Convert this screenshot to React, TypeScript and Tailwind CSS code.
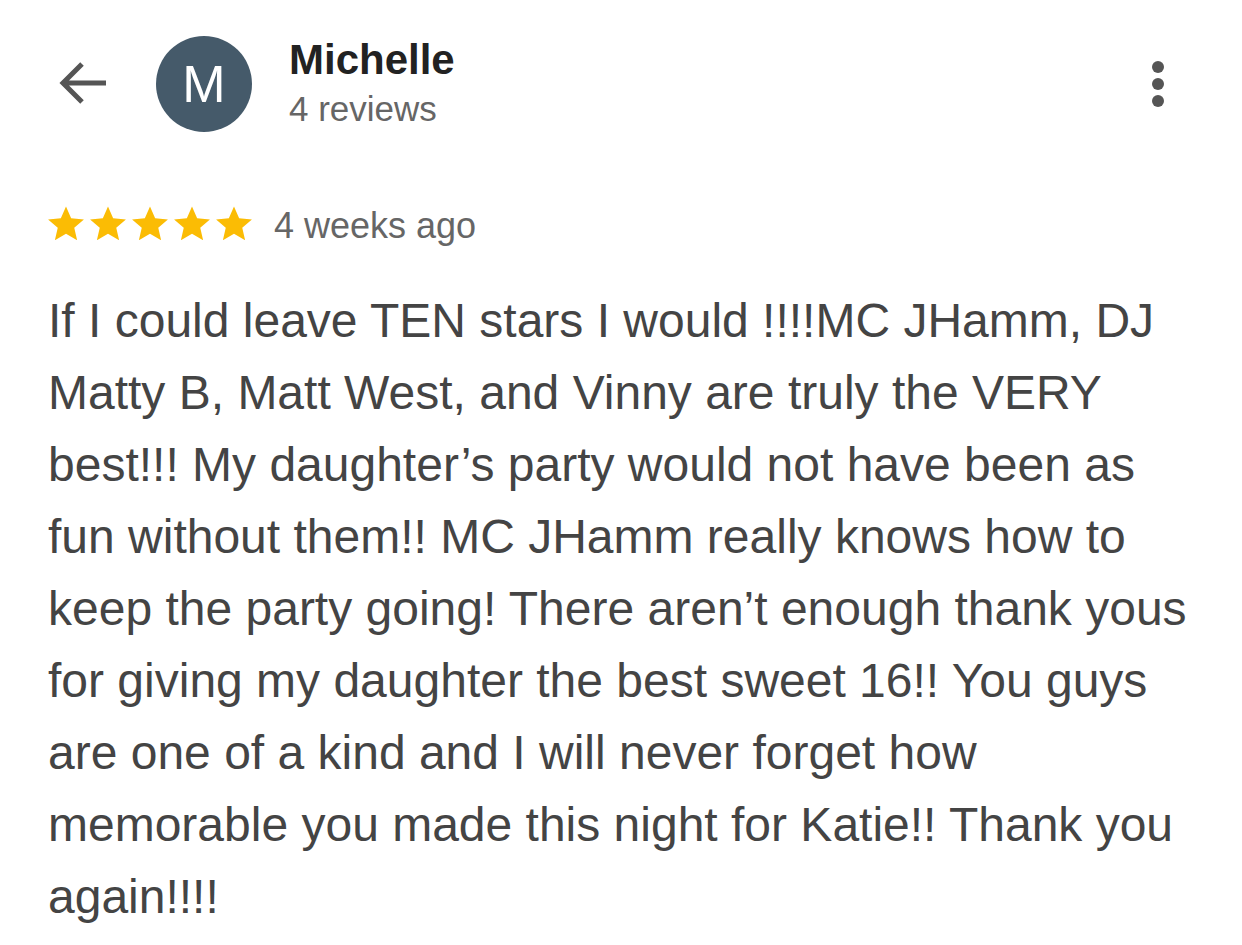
import React from "react";

const Star = () => (
  <svg width="40" height="40" viewBox="0 0 24 24" className="block">
    <path
      fill="#fbbc04"
      d="M12 1.5l3.09 7.03 7.66.7-5.8 5.06 1.72 7.51L12 17.82 5.33 21.8l1.72-7.51-5.8-5.06 7.66-.7z"
    />
  </svg>
);

export default function App() {
  return (
    <div
      className="w-[1242px] h-[945px] bg-white overflow-hidden"
      style={{ fontFamily: '"Liberation Sans", Arial, sans-serif' }}
    >
      <div className="flex items-start pt-[36px] pl-[58px] pr-[78px]">
        <svg width="52" height="48" viewBox="0 0 52 48" className="mt-[23px]">
          <path
            d="M48 24H6M24 5L5 24l19 19"
            fill="none"
            stroke="#555"
            strokeWidth="5"
            strokeLinecap="butt"
          />
        </svg>
        <div className="ml-[46px] w-[96px] h-[96px] rounded-full bg-[#455a6a] flex items-center justify-center text-white text-[52px] leading-none">
          M
        </div>
        <div className="ml-[37px] flex flex-col">
          <div className="text-[42px] leading-[50px] font-bold text-[#222] mt-[-1px]">Michelle</div>
          <div className="text-[35px] leading-[40px] text-[#666] mt-[4px]">4 reviews</div>
        </div>
        <div className="ml-auto mt-[25px] flex flex-col items-center gap-[5px]">
          <div className="w-[12px] h-[12px] rounded-full bg-[#555]" />
          <div className="w-[12px] h-[12px] rounded-full bg-[#555]" />
          <div className="w-[12px] h-[12px] rounded-full bg-[#555]" />
        </div>
      </div>

      <div className="flex items-center pl-[46px] mt-[70px]">
        <div className="flex gap-[2px]">
          <Star />
          <Star />
          <Star />
          <Star />
          <Star />
        </div>
        <div className="ml-[20px] mt-[4px] text-[36px] leading-[40px] text-[#666]">4 weeks ago</div>
      </div>

      <p className="pl-[48px] w-[1210px] mt-[39px] text-[48px] leading-[72px] text-[#444]">
        If I could leave TEN stars I would !!!!MC JHamm, DJ Matty B, Matt West, and Vinny are truly the VERY
        best!!! My daughter’s party would not have been as fun without them!! MC JHamm really knows how to
        keep the party going! There aren’t enough thank yous for giving my daughter the best sweet 16!! You
        guys are one of a kind and I will never forget how memorable you made this night for Katie!! Thank you
        again!!!!
      </p>
    </div>
  );
}
